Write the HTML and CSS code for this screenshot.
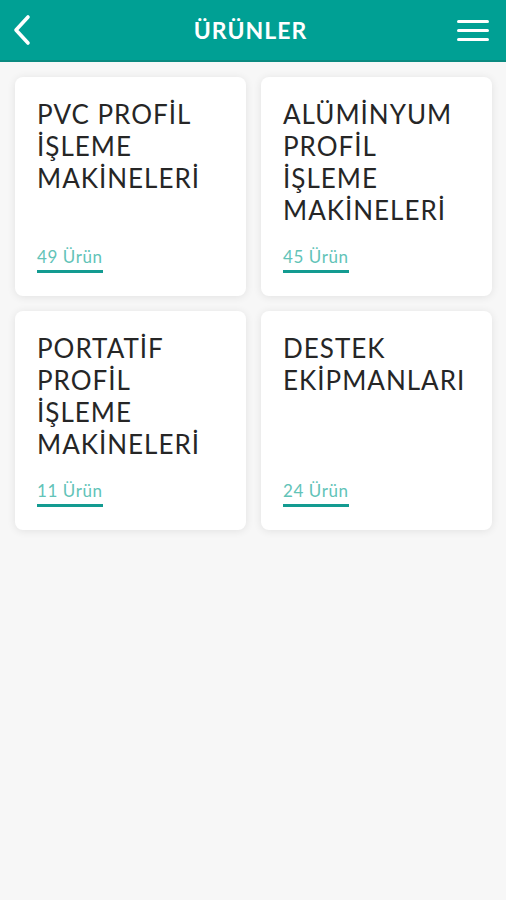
FILE: index.html
```html
<!DOCTYPE html>
<html lang="tr">
<head>
    <meta charset="UTF-8">
    <meta name="viewport" content="width=device-width, initial-scale=1.0">
    <title>Ürünler</title>
    <link rel="stylesheet" href="styles.css">
</head>
<body>
    <header class="topbar">
        <a class="back" href="#">
            <svg width="20" height="32" viewBox="0 0 20 32">
                <path d="M16 3 L4 16 L16 29" fill="none" stroke="#fff" stroke-width="3.6" stroke-linecap="round" stroke-linejoin="round"/>
            </svg>
        </a>
        <h1>ÜRÜNLER</h1>
        <a class="menu" href="#">
            <span></span><span></span><span></span>
        </a>
    </header>

    <div class="grid">
        <a class="card" href="#">
            <h2>PVC PROFİL İŞLEME MAKİNELERİ</h2>
            <span class="count">49 Ürün</span>
        </a>
        <a class="card" href="#">
            <h2>ALÜMİNYUM PROFİL İŞLEME MAKİNELERİ</h2>
            <span class="count">45 Ürün</span>
        </a>
        <a class="card" href="#">
            <h2>PORTATİF PROFİL İŞLEME MAKİNELERİ</h2>
            <span class="count">11 Ürün</span>
        </a>
        <a class="card" href="#">
            <h2>DESTEK EKİPMANLARI</h2>
            <span class="count">24 Ürün</span>
        </a>
    </div>
</body>
</html>
```

FILE: styles.css
```css
body {
    margin: 0;
    padding: 0;
    font-family: 'Lato', 'Noto Sans', sans-serif;
    background: #f7f7f7;
    color: #222;
    min-height: 100vh;
}

.topbar {
    height: 60px;
    background: #00a094;
    border-bottom: 2px solid #0a8a80;
    display: flex;
    align-items: center;
    justify-content: space-between;
    padding: 0 17px 0 12px;
}

.topbar h1 {
    margin: 0;
    font-size: 23px;
    font-weight: bold;
    color: #fff;
    letter-spacing: 1px;
    padding-left: 12px;
}

.back {
    display: flex;
    width: 20px;
}

.menu {
    display: flex;
    flex-direction: column;
    gap: 6px;
    width: 32px;
}

.menu span {
    display: block;
    height: 3px;
    background: #fff;
    border-radius: 2px;
}

.grid {
    display: grid;
    grid-template-columns: 1fr 1fr;
    gap: 15px;
    padding: 15px 14px 15px 15px;
}

.card {
    display: flex;
    flex-direction: column;
    align-items: flex-start;
    background: #fff;
    border-radius: 8px;
    box-shadow: 0 1px 8px rgba(0, 0, 0, 0.09);
    padding: 21px 22px 23px;
    text-decoration: none;
    color: #222;
}

.card h2 {
    margin: 0 0 20px;
    font-size: 26px;
    line-height: 32px;
    font-weight: normal;
    letter-spacing: 1px;
    color: #262626;
}

.count {
    margin-top: auto;
    font-size: 17px;
    line-height: 22px;
    letter-spacing: 0.6px;
    color: #62c3b8;
    padding-bottom: 2px;
    border-bottom: 3px solid #139b91;
}
```
